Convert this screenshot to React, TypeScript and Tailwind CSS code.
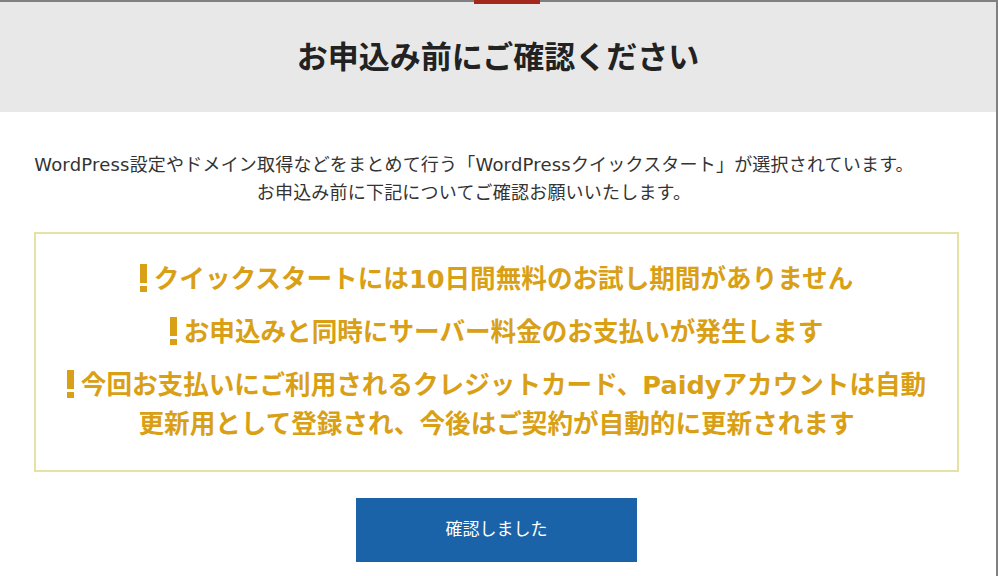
const notices = [
  ['クイックスタートには10日間無料のお試し期間がありません'],
  ['お申込みと同時にサーバー料金のお支払いが発生します'],
  ['今回お支払いにご利用されるクレジットカード、Paidyアカウントは自動', '更新用として登録され、今後はご契約が自動的に更新されます'],
];

function Bang() {
  return (
    <span className="relative top-[-3px] mr-[7px] inline-flex flex-col items-center gap-[3px] align-middle">
      <span className="block h-[19px] w-[7px] bg-[#d9a016]" />
      <span className="block h-[6px] w-[7px] bg-[#d9a016]" />
    </span>
  );
}

export default function App() {
  return (
    <div className="relative h-[576px] w-[998px] overflow-hidden bg-white font-['DejaVu_Sans','Noto_Sans_CJK_JP',sans-serif]">
      <div className="absolute left-[474px] top-0 h-[4px] w-[66px] bg-[#a3271b]" />
      <div className="h-full w-[998px] border-t-2 border-r-2 border-[#808080]">
        <div className="flex h-[110px] items-center justify-center bg-[#e8e8e8]">
          <h1 className="text-[31px] font-bold text-[#222]">お申込み前にご確認ください</h1>
        </div>

        <div className="px-[34px] pt-[39px]">
          <p className="mr-[48px] text-center text-[18px] leading-[28px] tracking-[0.2px] text-[#333]">
            WordPress設定やドメイン取得などをまとめて行う「WordPressクイックスタート」が選択されています。
            <br />
            お申込み前に下記についてご確認お願いいたします。
          </p>

          <div className="mt-[25px] flex h-[240px] w-[925px] flex-col items-center justify-center gap-[14px] border-2 border-[#e6e1a4] text-[#d9a016]">
            {notices.map((lines) => (
              <div key={lines[0]} className="text-center text-[25.6px] font-bold leading-[39px]">
                {lines.map((line, i) => (
                  <div key={line}>
                    {i === 0 && <Bang />}
                    {line}
                  </div>
                ))}
              </div>
            ))}
          </div>

          <div className="mt-[26px] flex justify-center pr-[3px]">
            <button className="h-[64px] w-[281px] bg-[#1a63a8] text-[17px] text-white">確認しました</button>
          </div>
        </div>
      </div>
    </div>
  );
}
